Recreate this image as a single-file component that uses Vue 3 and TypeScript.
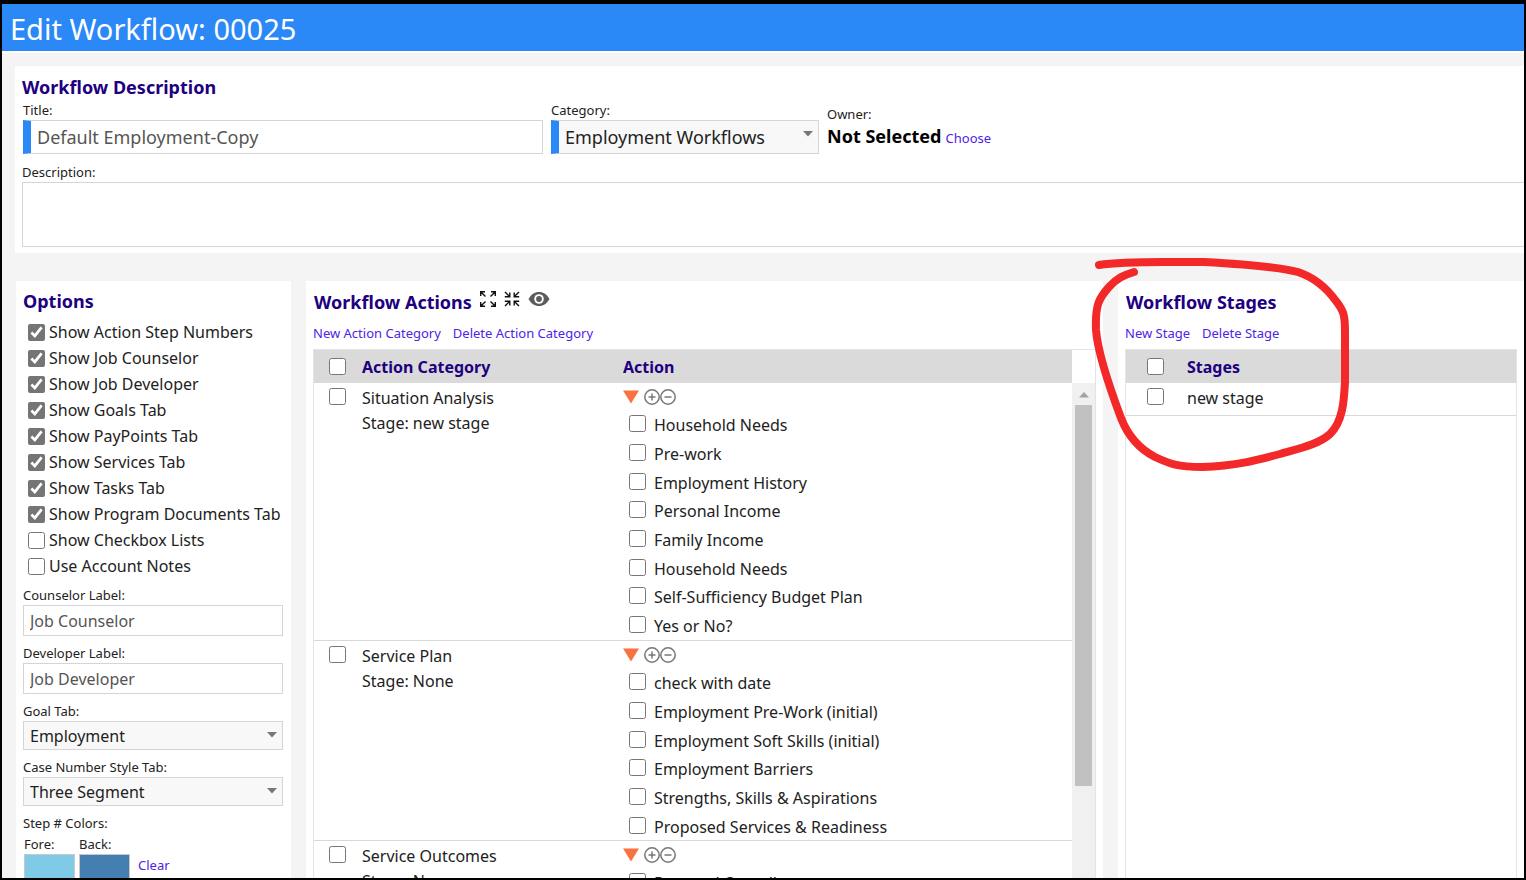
<script setup lang="ts">
import { ref } from 'vue'

interface Option {
  id: string
  label: string
  checked: boolean
}

interface ActionCategory {
  id: string
  name: string
  stage: string
  actions: string[]
}

const title = ref('Default Employment-Copy')
const category = ref('Employment Workflows')
const description = ref('')
const counselorLabel = ref('Job Counselor')
const developerLabel = ref('Job Developer')
const goalTab = ref('Employment')
const caseStyle = ref('Three Segment')

const options = ref<Option[]>([
  { id: 'steps', label: 'Show Action Step Numbers', checked: true },
  { id: 'counselor', label: 'Show Job Counselor', checked: true },
  { id: 'developer', label: 'Show Job Developer', checked: true },
  { id: 'goals', label: 'Show Goals Tab', checked: true },
  { id: 'paypoints', label: 'Show PayPoints Tab', checked: true },
  { id: 'services', label: 'Show Services Tab', checked: true },
  { id: 'tasks', label: 'Show Tasks Tab', checked: true },
  { id: 'documents', label: 'Show Program Documents Tab', checked: true },
  { id: 'lists', label: 'Show Checkbox Lists', checked: false },
  { id: 'notes', label: 'Use Account Notes', checked: false },
])

const categories: ActionCategory[] = [
  {
    id: 'situation',
    name: 'Situation Analysis',
    stage: 'new stage',
    actions: [
      'Household Needs',
      'Pre-work',
      'Employment History',
      'Personal Income',
      'Family Income',
      'Household Needs',
      'Self-Sufficiency Budget Plan',
      'Yes or No?',
    ],
  },
  {
    id: 'plan',
    name: 'Service Plan',
    stage: 'None',
    actions: [
      'check with date',
      'Employment Pre-Work (initial)',
      'Employment Soft Skills (initial)',
      'Employment Barriers',
      'Strengths, Skills & Aspirations',
      'Proposed Services & Readiness',
    ],
  },
  {
    id: 'outcomes',
    name: 'Service Outcomes',
    stage: 'None',
    actions: ['Personal Overall'],
  },
]

const stages = ['new stage']
</script>

<template>
  <div class="window">
    <header class="titlebar">
      <h1>Edit Workflow: 00025</h1>
    </header>

    <main class="page">
      <section class="panel summary">
        <h2>Workflow Description</h2>
        <div class="fields">
          <div class="field title-field">
            <label for="title">Title:</label>
            <input id="title" v-model="title" class="control large required" type="text" />
          </div>
          <div class="field category-field">
            <label for="category">Category:</label>
            <div class="select-wrap">
              <select id="category" v-model="category" class="control large required">
                <option>Employment Workflows</option>
              </select>
              <svg class="caret" viewBox="0 0 10 6" aria-hidden="true"><path d="M0 0h10L5 5.5z" /></svg>
            </div>
          </div>
          <div class="owner">
            <span class="caption">Owner:</span>
            <div><strong>Not Selected</strong> <a href="#choose">Choose</a></div>
          </div>
        </div>
        <label class="description-label" for="description">Description:</label>
        <textarea id="description" v-model="description"></textarea>
      </section>

      <div class="columns">
        <section class="panel options">
          <h2>Options</h2>
          <ul class="option-list">
            <li v-for="option in options" :key="option.id">
              <label :for="option.id">
                <input :id="option.id" v-model="option.checked" class="tick" type="checkbox" />
                {{ option.label }}
              </label>
            </li>
          </ul>
          <div class="field">
            <label for="counselor-label">Counselor Label:</label>
            <input id="counselor-label" v-model="counselorLabel" class="control" type="text" />
          </div>
          <div class="field">
            <label for="developer-label">Developer Label:</label>
            <input id="developer-label" v-model="developerLabel" class="control" type="text" />
          </div>
          <div class="field">
            <label for="goal-tab">Goal Tab:</label>
            <div class="select-wrap">
              <select id="goal-tab" v-model="goalTab" class="control">
                <option>Employment</option>
              </select>
              <svg class="caret" viewBox="0 0 10 6" aria-hidden="true"><path d="M0 0h10L5 5.5z" /></svg>
            </div>
          </div>
          <div class="field">
            <label for="case-style">Case Number Style Tab:</label>
            <div class="select-wrap">
              <select id="case-style" v-model="caseStyle" class="control">
                <option>Three Segment</option>
              </select>
              <svg class="caret" viewBox="0 0 10 6" aria-hidden="true"><path d="M0 0h10L5 5.5z" /></svg>
            </div>
          </div>
          <span class="caption">Step # Colors:</span>
          <div class="colors">
            <div class="color">
              <label for="fore">Fore:</label>
              <button id="fore" class="swatch fore" type="button"></button>
            </div>
            <div class="color">
              <label for="back">Back:</label>
              <button id="back" class="swatch back" type="button"></button>
            </div>
            <a href="#clear">Clear</a>
          </div>
        </section>

        <section class="panel listing">
          <div class="heading">
            <h2>Workflow Actions</h2>
            <button class="icon-button" type="button" aria-label="Expand all">
              <svg width="16" height="16" viewBox="0 0 16 16" fill="none" stroke="#111" stroke-width="1.400">
                <path d="M0.700 5V0.700H5M0.700 0.700L5.500 5.500M11 0.700h4.300V5M15.300 0.700L10.500 5.500M0.700 11v4.300H5M0.700 15.300L5.500 10.500M11 15.300h4.300V11M15.300 15.300L10.500 10.500" />
              </svg>
            </button>
            <button class="icon-button" type="button" aria-label="Collapse all">
              <svg width="16" height="16" viewBox="0 0 16 16" fill="none" stroke="#111" stroke-width="1.400">
                <path d="M5.800 1.500v4.300H0.800M5.800 5.800L1 1M10.200 1.500v4.300h5M10.200 5.800L15 1M5.800 14.500v-4.300H0.800M5.800 10.200L1 15M10.200 14.500v-4.300h5M10.200 10.200L15 15" />
              </svg>
            </button>
            <button class="icon-button" type="button" aria-label="Preview">
              <svg width="22" height="16" viewBox="0 0 22 16">
                <path d="M0.500 8C3 3.500 6.500 1 11 1s8 2.500 10.500 7C19 12.500 15.500 15 11 15S3 12.500 0.500 8z" fill="#5c5c5c" />
                <circle cx="11" cy="8" r="4.800" fill="#fff" />
                <circle cx="11" cy="8" r="2.900" fill="#5c5c5c" />
              </svg>
            </button>
          </div>
          <nav class="links">
            <a href="#new-category">New Action Category</a>
            <a href="#delete-category">Delete Action Category</a>
          </nav>
          <div class="grid-box">
            <table class="actions-table">
              <thead>
                <tr>
                  <th class="pick"><input class="tick" type="checkbox" aria-label="Select all categories" /></th>
                  <th class="name">Action Category</th>
                  <th>Action</th>
                </tr>
              </thead>
              <tbody>
                <tr v-for="item in categories" :key="item.id">
                  <td class="pick"><input class="tick" type="checkbox" :aria-label="item.name" /></td>
                  <td class="name">
                    {{ item.name }}<br />Stage: {{ item.stage }}
                  </td>
                  <td>
                    <div class="tools">
                      <button class="icon-button" type="button" aria-label="Collapse">
                        <svg width="16" height="14" viewBox="0 0 16 14"><path d="M0 0.500h16L8 13.500z" fill="#f97240" /></svg>
                      </button>
                      <button class="icon-button add" type="button" aria-label="Add action">
                        <svg width="16" height="16" viewBox="0 0 16 16" fill="none" stroke="#777" stroke-width="1.500">
                          <circle cx="8" cy="8" r="7.200" />
                          <path d="M4.500 8h7M8 4.500v7" />
                        </svg>
                      </button>
                      <button class="icon-button" type="button" aria-label="Remove action">
                        <svg width="16" height="16" viewBox="0 0 16 16" fill="none" stroke="#777" stroke-width="1.500">
                          <circle cx="8" cy="8" r="7.200" />
                          <path d="M4.500 8h7" />
                        </svg>
                      </button>
                    </div>
                    <ul class="action-list">
                      <li v-for="(action, index) in item.actions" :key="index">
                        <input :id="`${item.id}-${index}`" class="tick" type="checkbox" />
                        <label :for="`${item.id}-${index}`">{{ action }}</label>
                      </li>
                    </ul>
                  </td>
                </tr>
              </tbody>
            </table>
            <div class="rail" aria-hidden="true">
              <svg width="10" height="6" viewBox="0 0 10 6"><path d="M0 5.500h10L5 0z" fill="#a3a3a3" /></svg>
              <div class="thumb"></div>
            </div>
          </div>
        </section>

        <section class="panel listing">
          <div class="heading">
            <h2>Workflow Stages</h2>
          </div>
          <nav class="links">
            <a href="#new-stage">New Stage</a>
            <a href="#delete-stage">Delete Stage</a>
          </nav>
          <div class="grid-box">
            <table class="stages-table">
              <thead>
                <tr>
                  <th class="pick"><input class="tick" type="checkbox" aria-label="Select all stages" /></th>
                  <th>Stages</th>
                </tr>
              </thead>
              <tbody>
                <tr v-for="stage in stages" :key="stage">
                  <td class="pick"><input class="tick" type="checkbox" :aria-label="stage" /></td>
                  <td>{{ stage }}</td>
                </tr>
              </tbody>
            </table>
          </div>
          <svg class="marker" width="270" height="220" viewBox="1090 255 270 220" aria-hidden="true">
            <path
              d="M1099 265C1118 262 1140 262 1165 262H1204C1240 264 1280 267 1298 272C1316 278 1328 290 1336 301C1344 311 1345 316 1345 332V382C1344 400 1343 422 1330 434C1318 445 1296 449 1280 454C1258 460 1236 466 1202 467C1178 467 1170 464 1155 457C1136 447 1126 431 1121 418C1112 394 1098 356 1096 330C1095 305 1099 298 1109 287C1117 278 1124 275 1134 272"
            />
          </svg>
        </section>
      </div>
    </main>
  </div>
</template>

<style>
html,
body {
  margin: 0;
  overflow: hidden;
}
</style>

<style scoped>
* {
  box-sizing: border-box;
}

.window {
  display: flex;
  flex-direction: column;
  height: 100vh;
  overflow: hidden;
  border: 2px solid #000;
  border-top-width: 4px;
  background: #f4f4f4;
  color: #222;
  font: 16px/24px "Segoe UI", "Noto Sans", "Open Sans", sans-serif;
}

.titlebar {
  flex: none;
  height: 49px;
  padding: 0 8px;
  border-bottom: 2px solid #fff;
  background: #2b88f7;
}

h1 {
  margin: 0;
  color: #fff;
  font-size: 29px;
  font-weight: 400;
  line-height: 50px;
}

h2 {
  margin: 0;
  color: #21007f;
  font-size: 18px;
  font-weight: 700;
  line-height: 28px;
}

a {
  color: #4f22e6;
  font-size: 13px;
  text-decoration: none;
}

.page {
  display: flex;
  flex: 1;
  flex-direction: column;
  gap: 28px;
  min-height: 0;
  padding: 13px 0 0 13px;
}

.panel {
  background: #fff;
}

.summary {
  flex: none;
  padding: 7px 0 6px 7px;
}

.fields {
  display: flex;
  gap: 8px;
  padding-left: 1px;
}

.title-field {
  width: 520px;
}

.category-field {
  width: 268px;
}

.field label,
.color label,
.description-label,
.caption {
  display: block;
  font-size: 13px;
  line-height: 19px;
}

.control {
  display: block;
  width: 100%;
  height: 31px;
  padding: 0 6px;
  border: 1px solid #d5d5d5;
  border-radius: 0;
  outline: 0;
  background: #fff;
  color: #555;
  font: inherit;
}

select.control {
  height: 29px;
  appearance: none;
  background: #f8f8f8;
  color: #222;
}

.control.large,
select.control.large {
  height: 34px;
  font-size: 18px;
}

.control.required {
  border-left: 8px solid #2b88f7;
}

.select-wrap {
  position: relative;
}

.caret {
  position: absolute;
  top: 11px;
  right: 6px;
  width: 10px;
  height: 6px;
  fill: #777;
  pointer-events: none;
}

.owner {
  padding-top: 4px;
}

.owner strong {
  color: #000;
  font-size: 18px;
  font-weight: 700;
}

.description-label {
  margin-top: 9px;
}

textarea {
  display: block;
  width: 100%;
  height: 65px;
  border: 1px solid #d5d5d5;
  border-right: 0;
  outline: 0;
  resize: none;
  font: inherit;
}

.columns {
  display: grid;
  flex: 1;
  grid-template-columns: 275px minmax(0, 1fr) 406px;
  gap: 15px;
  min-height: 0;
  padding-left: 1px;
}

.options {
  padding: 6px 8px 0 7px;
}

.option-list,
.action-list {
  margin: 0;
  padding: 0;
  list-style: none;
}

.option-list {
  margin: 4px 0 7px;
  padding-left: 5px;
}

.option-list label {
  display: flex;
  align-items: center;
  gap: 4px;
  height: 26px;
  white-space: nowrap;
}

.tick {
  display: block;
  flex: none;
  width: 17px;
  height: 17px;
  margin: 0;
  accent-color: #757575;
}

.options .field {
  margin-bottom: 8px;
}

.colors {
  display: flex;
  gap: 4px;
  padding: 2px 0 0 1px;
}

.swatch {
  display: block;
  width: 51px;
  height: 30px;
  padding: 0;
  border: 1px solid #c8c8c8;
}

.swatch.fore {
  background: #7fcae7;
}

.swatch.back {
  background: #457eb0;
}

.colors a {
  padding: 18px 0 0 4px;
}

.listing {
  position: relative;
  display: flex;
  flex-direction: column;
  min-height: 0;
  padding: 7px 7px 0;
}

.heading {
  display: flex;
  gap: 8px;
  padding-left: 1px;
}

.heading svg {
  margin-top: 3px;
}

.icon-button {
  display: block;
  height: 16px;
  padding: 0;
  border: 0;
  background: none;
  line-height: 0;
}

.links {
  display: flex;
  gap: 12px;
  margin: 5px 0 4px;
}

.grid-box {
  display: flex;
  flex: 1;
  align-items: flex-start;
  min-height: 0;
  overflow: hidden;
  border: 1px solid #e4e4e4;
  border-bottom: 0;
}

table {
  flex: 1;
  border-collapse: collapse;
  table-layout: fixed;
}

th,
td {
  padding: 0;
  text-align: left;
  vertical-align: top;
}

th {
  height: 33px;
  background: #dadada;
  color: #21007f;
  font-weight: 700;
  vertical-align: middle;
}

td {
  padding-top: 3px;
  border-bottom: 1px solid #d8d8d8;
  line-height: 25px;
}

.actions-table .pick {
  width: 48px;
  padding-left: 15px;
}

.actions-table .name {
  width: 261px;
}

.stages-table .pick {
  width: 61px;
  padding-left: 21px;
}

.stages-table td {
  height: 32px;
}

td .tick {
  margin-top: 2px;
}

.tools {
  display: flex;
  align-items: center;
  height: 22px;
}

.tools .add {
  margin-left: 5px;
}

.action-list {
  padding: 0 0 2px 6px;
}

.action-list li {
  display: flex;
  gap: 8px;
  height: 29px;
  padding-top: 5px;
}

.action-list li:nth-child(3n) {
  height: 28px;
}

.action-list .tick {
  margin-top: 2px;
}

.rail {
  display: flex;
  flex: none;
  flex-direction: column;
  align-items: center;
  align-self: stretch;
  width: 23px;
  margin-top: 33px;
  padding-top: 9px;
  background: #f0f0f0;
}

.thumb {
  width: 17px;
  height: 381px;
  margin-top: 7px;
  background: #c1c1c1;
}

.marker {
  position: absolute;
  top: -26px;
  left: -28px;
  pointer-events: none;
}

.marker path {
  fill: none;
  stroke: #f32828;
  stroke-linecap: round;
  stroke-linejoin: round;
  stroke-width: 8;
}
</style>
